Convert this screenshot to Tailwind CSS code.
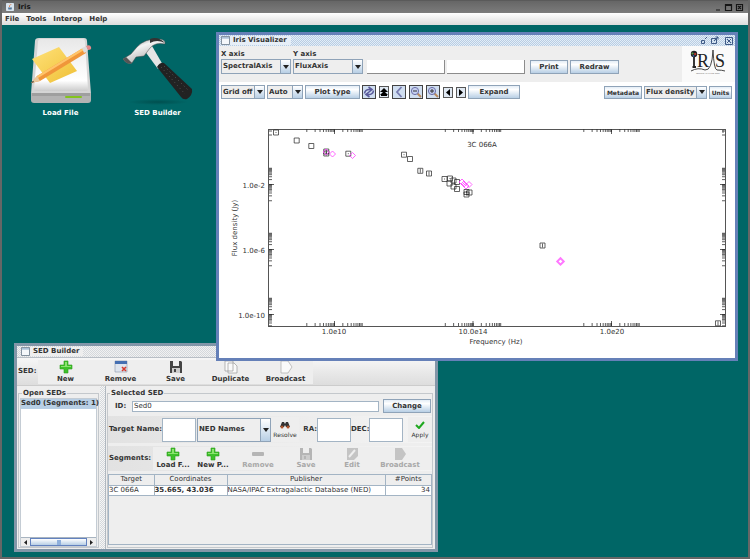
<!DOCTYPE html>
<html lang="en">
<head>
    <meta charset="UTF-8">
    <meta name="viewport" content="width=device-width, initial-scale=1.0">
    <title>Iris</title>
    <script src="https://cdn.jsdelivr.net/npm/@tailwindcss/browser@4"></script>
</head>
<body class="h-screen overflow-hidden flex flex-col bg-[#006666] border-x-2 border-b-2 border-[#666666] font-['DejaVu_Sans',sans-serif] text-[7px] leading-[9px] font-bold text-[#333333]">

    <!-- shared icons -->
    <svg class="hidden">
        <symbol id="arrow" viewBox="0 0 6 4"><path d="M0 0h6L3 4z" fill="#222"/></symbol>
        <symbol id="plus" viewBox="0 0 14 14"><path d="M5 1h4v4h4v4H9v4H5V9H1V5h4z" fill="#3fc12c" stroke="#2b9a1c" stroke-width=".6"/><path d="M6 2h2v4h4v1H2V6h4z" fill="#8be36f"/></symbol>
        <symbol id="minus" viewBox="0 0 14 14"><rect x="1" y="5" width="12" height="4" rx="1" fill="#b5b5b5"/></symbol>
        <symbol id="disk" viewBox="0 0 14 14"><path d="M1 1h11l1 1v11H1z" fill="currentColor"/><path d="M4 1h6v5H4z" fill="#eee"/><path d="M3 8h8v5H3z" fill="#ccc"/><path d="M5 9h2v3H5z" fill="currentColor"/></symbol>
        <symbol id="tag" viewBox="0 0 14 14"><path d="M2 1h7l4 6-4 6H2z" fill="currentColor"/></symbol>
        <symbol id="frame" viewBox="0 0 10 10"><path d="M.5.5h9v9h-9z" fill="#f4f7fa" stroke="#6f7f8f"/><path d="M1 1h8v2H1z" fill="#a9bfd6"/></symbol>
        <symbol id="lens" viewBox="0 0 12 12"><path d="M7 7l4 4" stroke="#b98a5c" stroke-width="2"/><circle cx="5" cy="5" r="3.6" fill="#c5cff0" stroke="#6c6fa8"/></symbol>
    </svg>

    <header class="h-[13px] shrink-0 flex items-center gap-1 px-1 border-t border-[#5a5a5a] bg-linear-to-b from-[#666666] to-[#7c7c7c] text-[#161616]">
        <svg class="size-2" viewBox="0 0 10 10"><rect width="10" height="10" rx="1" fill="#d8e4ee"/><path d="M5 1q2 1 0 2t0 2" fill="none" stroke="#e06a2c"/><path d="M2.500 5.500h5L7 8H3z" fill="#56789c"/></svg>
        <h1 class="grow">Iris</h1>
        <svg class="w-[30px] h-[9px]" viewBox="0 0 30 9" fill="none" stroke="#161616" stroke-width="1.200"><path d="M2 7h4M11.500 1.500h6v6h-6zM11.500 2.500h6M22.500 1.500h6v6h-6zM24 3l3 3M27 3l-3 3"/></svg>
    </header>

    <nav class="h-3 shrink-0 flex items-center gap-[7px] px-[3px] bg-linear-to-b from-white to-[#dcdcdc]">
        <a href="#">File</a>
        <a href="#">Tools</a>
        <a href="#">Interop</a>
        <a href="#">Help</a>
    </nav>

    <main class="relative grow">
        <div class="flex gap-4 pl-[18px] pt-[10px] text-white">
            <a href="#" class="w-[81px] flex flex-col items-center gap-1">
                <svg class="w-[64px] h-[70px]" viewBox="0 0 64 70">
                    <defs>
                        <linearGradient id="body" x2="0" y2="1"><stop stop-color="#e8e8e8"/><stop offset=".8" stop-color="#fff"/><stop offset="1" stop-color="#ccc"/></linearGradient>
                        <linearGradient id="note" x2="1" y2="1"><stop stop-color="#ffe27a"/><stop offset="1" stop-color="#efbf35"/></linearGradient>
                    </defs>
                    <path d="M6 6q0-3 4-3h45q3 0 3 3l4 53q0 3-3 3H5q-3 0-3-3z" fill="#d5d5d5"/>
                    <path d="M9 7q0-3 3-3h41q3 0 3 3l3 47q0 2-2 2H7q-2 0-2-2z" fill="url(#body)"/>
                    <path d="M2 58h60v7q0 3-3 3H5q-3 0-3-3z" fill="#b3b3b3"/>
                    <path d="M3 58h58v3H3z" fill="#8c8c8c" opacity=".5"/>
                    <rect x="36" y="61" width="17" height="2" rx="1" fill="#83c41d"/>
                    <path d="M3 24l27-12 18 24-27 12z" fill="url(#note)"/>
                    <path d="M2 48l6-7 46-28 3 5L11 46z" fill="#f0963a"/>
                    <path d="M8 41l46-28 1 2L9 43z" fill="#ffc469"/>
                    <path d="M2 48l6-7 3 5z" fill="#e9c9a0"/><path d="M2 48l2-2 1 1z" fill="#222"/>
                    <path d="M53 13l4-2 2 4-4 3z" fill="#ddd"/><path d="M57 11q4-2 5 1t-3 3z" fill="#e58a8a"/>
                </svg>
                <span>Load File</span>
            </a>
            <a href="#" class="w-[81px] flex flex-col items-center gap-1">
                <svg class="w-[72px] h-[70px]" viewBox="0 0 72 70">
                    <defs>
                        <linearGradient id="steel" x2=".6" y2="1"><stop stop-color="#555"/><stop offset=".4" stop-color="#f4f4f4"/><stop offset="1" stop-color="#a8a8a8"/></linearGradient>
                        <radialGradient id="shade"><stop stop-color="#004f4f"/><stop offset="1" stop-color="#006666"/></radialGradient>
                    </defs>
                    <ellipse cx="36" cy="67" rx="30" ry="3" fill="url(#shade)"/>
                    <path d="M22 15l8-4 11 19-5 4z" fill="#e5e5e5"/>
                    <path d="M1 24l8-5 6-7q8-9 23-8 6 1 5 5-10-2-15 4l-6 8-8 1-4 6q-5 2-9-4z" fill="url(#steel)" stroke="#444" stroke-width=".5"/>
                    <path d="M28 4q8-3 15 4-8-4-15 0z" fill="#333"/>
                    <path d="M1 24l3-2 6 6q-5 2-9-4z" fill="#555"/>
                    <path d="M35 32q3-5 7-4l28 26q1 6-5 10-4 1-6-2z" fill="#222"/>
                    <path d="M39 32l24 27M42 31l24 24" stroke="#555" stroke-dasharray="1 3" fill="none"/>
                </svg>
                <span>SED Builder</span>
            </a>
        </div>

        <!-- SED Builder window -->
        <section class="absolute left-[12px] top-[318px] w-[424px] h-[209px] flex flex-col border-3 border-[#8296a8] bg-[#eeeeee]">
            <div class="h-3 shrink-0 flex items-center gap-1 px-1 border-b border-[#b8bec5] bg-[repeating-conic-gradient(#d4d8dc_0%_25%,#f1f1f1_0%_50%)] bg-size-[2px_2px]">
                <div class="flex items-center gap-[3px] pr-1 bg-[#eeeeee]">
                    <svg class="size-[9px]"><use href="#frame"/></svg>
                    <h2>SED Builder</h2>
                </div>
            </div>
            <div class="h-7 shrink-0 flex items-center border-b border-[#cccccc] bg-linear-to-b from-[#f6f6f6] to-[#dddddd]">
                <span class="w-[21px] pl-px">SED:</span>
                <div class="flex bg-[#eeeeee]">
                    <button class="w-[55px] flex flex-col items-center gap-px"><svg class="size-[14px]"><use href="#plus"/></svg>New</button>
                    <button class="w-[55px] flex flex-col items-center gap-px"><svg class="size-[14px]" viewBox="0 0 14 14"><path d="M1 1h12v11H1z" fill="#dfe5ee" stroke="#8b96a8" stroke-width=".6"/><path d="M1 1h12v3H1z" fill="#456fb2"/><path d="M8 7l4 4M12 7l-4 4" stroke="#d63a2d" stroke-width="1.600"/></svg>Remove</button>
                    <button class="w-[55px] flex flex-col items-center gap-px"><svg class="size-[14px] text-[#444444]"><use href="#disk"/></svg>Save</button>
                    <button class="w-[55px] flex flex-col items-center gap-px"><svg class="size-[14px]" viewBox="0 0 14 14"><path d="M1 1h8v10H1zM4 3h6l3 3v7H4z" fill="#fafafa" stroke="#999" stroke-width=".7"/></svg>Duplicate</button>
                    <button class="w-[55px] flex flex-col items-center gap-px"><svg class="size-[14px]" viewBox="0 0 14 14"><path d="M2 1h7l4 6-4 6H2z" fill="#fafafa" stroke="#aaa" stroke-width=".7"/></svg>Broadcast</button>
                </div>
            </div>

            <div class="grow flex min-h-0">
                <fieldset class="w-[81px] shrink-0 m-px mt-[3px] px-px pb-px border border-[#c4c8cc] min-w-0">
                    <legend class="ml-[2px] px-px">Open SEDs</legend>
                    <div class="h-[149px] flex flex-col border border-[#c4ccd4] bg-white">
                        <ul class="grow"><li class="h-[10px] bg-[#b8cfe5] whitespace-nowrap">Sed0 (Segments: 1)</li></ul>
                        <div class="h-[9px] flex border-t border-[#a8b4c0] bg-[#eeeeee]">
                            <button class="w-[9px] flex items-center justify-center" aria-label="Scroll left"><svg class="w-[3px] h-[5px]" viewBox="0 0 3 5"><path d="M3 0v5L0 2.500z" fill="#222"/></svg></button>
                            <div class="grow flex items-center justify-center border border-[#6382bf] bg-linear-to-b from-white to-[#b8cfe5]"><div class="w-1 h-[5px] bg-[#8fb0dc]"></div></div>
                            <button class="w-[9px] flex items-center justify-center" aria-label="Scroll right"><svg class="w-[3px] h-[5px]" viewBox="0 0 3 5"><path d="M0 0v5l3-2.500z" fill="#222"/></svg></button>
                        </div>
                    </div>
                </fieldset>
                <div class="w-[6px] shrink-0 border-r border-[#b0b8c0] bg-[repeating-conic-gradient(#d4d8dc_0%_25%,#f6f6f6_0%_50%)] bg-size-[2px_2px]"></div>
                <fieldset class="flex-1 min-w-0 m-px mt-[3px] mr-[2px] border border-[#c4c8cc]">
                    <legend class="ml-[2px] px-px">Selected SED</legend>
                    <div class="h-4 flex items-center px-px">
                        <label for="sedId" class="w-[23px] pl-[6px]">ID:</label>
                        <input id="sedId" type="text" value="Sed0" class="grow min-w-0 h-[11px] px-px mr-1 border border-[#a3b4c4] bg-white font-normal">
                        <button class="w-12 h-[14px] border border-[#8fa3b8] bg-linear-to-b from-[#e4edf6] via-white via-30% to-[#b8cfe5]">Change</button>
                    </div>
                    <div class="h-[27px] mt-[2px] flex items-center bg-linear-to-r from-[#e2e2e2] to-[#f4f4f4]">
                        <label for="target" class="w-[54px] pl-px whitespace-nowrap">Target Name:</label>
                        <input id="target" type="text" class="w-[34px] h-6 border border-[#a3b4c4] bg-white">
                        <div class="w-[74px] h-6 ml-px flex border border-[#8fa3b8]">
                            <select aria-label="Name service" class="grow min-w-0 appearance-none pl-px bg-[#eeeeee]"><option>NED Names</option></select>
                            <div class="w-[10px] flex items-center justify-center border-l border-[#8fa3b8] bg-linear-to-b from-white to-[#b8cfe5]"><svg class="w-[6px] h-1"><use href="#arrow"/></svg></div>
                        </div>
                        <button class="w-7 h-[25px] flex flex-col items-center justify-center gap-px bg-[#eeeeee] text-[6px] font-normal"><svg class="w-[10px] h-2" viewBox="0 0 10 8"><path d="M2 1h2l1 2 1-2h2l2 5H6L5 4 4 6H0z" fill="#333"/><circle cx="2" cy="6" r="1.500" fill="#b0532a"/><circle cx="8" cy="6" r="1.500" fill="#b0532a"/></svg>Resolve</button>
                        <label for="ra" class="w-[18px] text-right">RA:</label>
                        <input id="ra" type="text" class="w-[34px] h-6 border border-[#a3b4c4] bg-white">
                        <label for="dec" class="w-[18px] text-right">DEC:</label>
                        <input id="dec" type="text" class="w-[34px] h-6 border border-[#a3b4c4] bg-white">
                        <button class="w-6 h-[25px] ml-[5px] flex flex-col items-center justify-center gap-px bg-[#eeeeee] text-[6px] font-normal"><svg class="w-[10px] h-2" viewBox="0 0 10 8"><path d="M1 4l3 3 5-6" fill="none" stroke="#1fa81f" stroke-width="2"/></svg>Apply</button>
                    </div>
                    <div class="h-[25px] mt-[3px] flex items-center bg-linear-to-r from-[#e2e2e2] to-[#f4f4f4]">
                        <span class="w-[45px] pl-px">Segments:</span>
                        <div class="grow flex bg-[#eeeeee] text-[#a8a8a8]">
                            <button class="w-10 flex flex-col items-center text-[#333333]"><svg class="size-[14px]"><use href="#plus"/></svg>Load F...</button>
                            <button class="w-10 flex flex-col items-center text-[#333333]"><svg class="size-[14px]"><use href="#plus"/></svg>New P...</button>
                            <button class="w-[50px] flex flex-col items-center" disabled><svg class="size-[14px]"><use href="#minus"/></svg>Remove</button>
                            <button class="w-[46px] flex flex-col items-center" disabled><svg class="size-[14px] text-[#b5b5b5]"><use href="#disk"/></svg>Save</button>
                            <button class="w-[46px] flex flex-col items-center" disabled><svg class="size-[14px]" viewBox="0 0 14 14"><path d="M2 1h11v8l-4 4H2z" fill="#c4c4c4"/><path d="M4 10l6-7" stroke="#eee" stroke-width="2"/></svg>Edit</button>
                            <button class="w-[50px] flex flex-col items-center" disabled><svg class="size-[14px] text-[#c4c4c4]"><use href="#tag"/></svg>Broadcast</button>
                        </div>
                    </div>
                    <div class="h-[71px] mt-[3px] border border-[#a3b4c4]">
                        <table class="w-full table-fixed border-collapse font-normal text-left">
                            <thead>
                                <tr class="h-[10px] text-center">
                                    <th class="w-[45px] font-normal border-r border-b border-[#a3b4c4]">Target</th>
                                    <th class="w-[73px] font-normal border-r border-b border-[#a3b4c4]">Coordinates</th>
                                    <th class="font-normal border-r border-b border-[#a3b4c4]">Publisher</th>
                                    <th class="w-[46px] font-normal border-b border-[#a3b4c4]">#Points</th>
                                </tr>
                            </thead>
                            <tbody>
                                <tr class="h-[9px] bg-white whitespace-nowrap">
                                    <td class="border-r border-b border-[#a3b4c4]">3C 066A</td>
                                    <td class="font-bold border-r border-b border-[#a3b4c4]">35.665, 43.036</td>
                                    <td class="border-r border-b border-[#a3b4c4]">NASA/IPAC Extragalactic Database (NED)</td>
                                    <td class="pr-px text-right border-b border-[#a3b4c4]">34</td>
                                </tr>
                            </tbody>
                        </table>
                    </div>
                </fieldset>
            </div>
        </section>

        <!-- Visualizer window -->
        <section class="absolute left-[214px] top-[7px] w-[522px] h-[329px] flex flex-col border-3 border-[#6580b8] bg-white">
            <div class="h-[11px] shrink-0 flex items-center justify-between px-[2px] bg-[repeating-conic-gradient(#b8cde3_0%_25%,#e3edf7_0%_50%)] bg-size-[2px_2px]">
                <div class="flex items-center gap-[3px] pr-1 bg-[#e6eef7]">
                    <svg class="size-[9px]"><use href="#frame"/></svg>
                    <h2>Iris Visualizer</h2>
                </div>
                <svg class="w-[34px] h-[9px]" viewBox="0 0 34 9" fill="none" stroke="#3f5a86"><path d="M2.500 4.500h3v3h-3zM8 1L6 3M12.500 2.500h5v5h-5zM15 5l4-4M16.500 1H19v2.500M26.500 1.500h7v7h-7zM28 3l4 4M32 3l-4 4"/></svg>
            </div>
            <div class="h-9 shrink-0 flex bg-[#eeeeee]">
                <div class="grow flex items-end gap-[2px] pl-[2px] pb-2">
                    <div class="w-[70px]">
                        <label for="xAxis" class="block">X axis</label>
                        <div class="h-[15px] flex border border-[#8fa3b8]">
                            <select id="xAxis" class="grow min-w-0 appearance-none pl-px bg-[#eeeeee]"><option>SpectralAxis</option></select>
                            <div class="w-[10px] flex items-center justify-center border-l border-[#8fa3b8] bg-linear-to-b from-white to-[#b8cfe5]"><svg class="w-[6px] h-1"><use href="#arrow"/></svg></div>
                        </div>
                    </div>
                    <div class="w-[70px]">
                        <label for="yAxis" class="block">Y axis</label>
                        <div class="h-[15px] flex border border-[#8fa3b8]">
                            <select id="yAxis" class="grow min-w-0 appearance-none pl-px bg-[#eeeeee]"><option>FluxAxis</option></select>
                            <div class="w-[10px] flex items-center justify-center border-l border-[#8fa3b8] bg-linear-to-b from-white to-[#b8cfe5]"><svg class="w-[6px] h-1"><use href="#arrow"/></svg></div>
                        </div>
                    </div>
                    <input type="text" aria-label="Minimum" class="w-[78px] h-[14px] ml-[2px] border-r border-b border-[#8c8c8c] bg-white">
                    <input type="text" aria-label="Maximum" class="w-[78px] h-[14px] border-r border-b border-[#8c8c8c] bg-white">
                    <button class="w-[38px] h-[14px] ml-[3px] border border-[#8fa3b8] bg-linear-to-b from-[#e4edf6] via-white via-30% to-[#b8cfe5]">Print</button>
                    <button class="w-[49px] h-[14px] border border-[#8fa3b8] bg-linear-to-b from-[#e4edf6] via-white via-30% to-[#b8cfe5]">Redraw</button>
                </div>
                <svg class="w-[53px] h-9 bg-[#fafafa]" viewBox="0 0 53 36">
                    <g font-family="Liberation Serif, serif" font-weight="normal" fill="#222">
                        <text x="15" y="21" font-size="18">R</text>
                        <text x="33" y="21" font-size="18">S</text>
                        <text x="26" y="28" font-size="2" text-anchor="middle">IRIS SED ANALYSIS TOOL</text>
                    </g>
                    <path d="M12 9v12M10.500 21h3.500" stroke="#222" stroke-width="1.800"/>
                    <circle cx="12" cy="8" r="3.200" fill="#222"/><circle cx="10.500" cy="7.500" r="1.100" fill="#5a9e4a"/><circle cx="13.200" cy="8" r="1.100" fill="#cf3b2f"/><circle cx="11.500" cy="9.800" r=".9" fill="#3a66b8"/>
                    <path d="M9 25q7-4 14-1 7 1 8-20 1 20 4 20 5 0 8 1" fill="none" stroke="#333" stroke-width=".9"/>
                </svg>
            </div>
            <div class="h-[20px] shrink-0 flex items-center pl-[2px] pr-[3px] gap-[2px]">
                <div class="w-[44px] h-[14px] flex border border-[#8fa3b8]">
                    <select aria-label="Grid" class="grow min-w-0 appearance-none pl-px bg-[#eeeeee]"><option>Grid off</option></select>
                    <div class="w-[10px] flex items-center justify-center border-l border-[#8fa3b8] bg-linear-to-b from-white to-[#b8cfe5]"><svg class="w-[6px] h-1"><use href="#arrow"/></svg></div>
                </div>
                <div class="w-[36px] h-[14px] flex border border-[#8fa3b8]">
                    <select aria-label="Scale" class="grow min-w-0 appearance-none pl-px bg-[#eeeeee]"><option>Auto</option></select>
                    <div class="w-[10px] flex items-center justify-center border-l border-[#8fa3b8] bg-linear-to-b from-white to-[#b8cfe5]"><svg class="w-[6px] h-1"><use href="#arrow"/></svg></div>
                </div>
                <button class="w-[55px] h-[14px] border border-[#8fa3b8] bg-linear-to-b from-[#e4edf6] via-white via-30% to-[#b8cfe5]">Plot type</button>
                <div class="flex items-center gap-[3px]">
                    <button aria-label="Reset" class="size-[14px] flex items-center justify-center border border-[#444444] bg-[#d0def0]"><svg class="size-3" viewBox="0 0 12 12" fill="none" stroke="#5c5c9c" stroke-width="1.600"><path d="M1.500 7.500Q2 3 7.500 3.500M5.500 1l3.500 2.500L6 6M10.500 4.500Q10 9 4.500 8.500M6.500 11L3 8.500 6 6"/></svg></button>
                    <button aria-label="Up" class="w-[10px] h-3 flex items-center justify-center border border-[#555555] bg-[#dfe8f2]"><svg class="size-2" viewBox="0 0 8 8"><path d="M4 0l4 4H0zM4 3l4 4H0zM1 7h6v1H1z" fill="#000"/></svg></button>
                    <button aria-label="Back" class="size-[14px] flex items-center justify-center border border-[#444444] bg-[#d0def0]"><svg class="size-3" viewBox="0 0 12 12"><path d="M8.500 1L4 6l4.500 5" fill="none" stroke="#777cb0" stroke-width="1.800"/></svg></button>
                    <button aria-label="Zoom out" class="size-[14px] flex items-center justify-center border border-[#444444] bg-[#d0def0]"><svg class="size-3" viewBox="0 0 12 12"><use href="#lens"/><path d="M3 5h4" stroke="#333"/></svg></button>
                    <button aria-label="Zoom in" class="size-[14px] flex items-center justify-center border border-[#444444] bg-[#d0def0]"><svg class="size-3" viewBox="0 0 12 12"><use href="#lens"/><path d="M3 5h4M5 3v4" stroke="#333"/></svg></button>
                    <button aria-label="Left" class="w-[10px] h-[11px] flex items-center justify-center border border-[#555555] bg-[#dfe8f2]"><svg class="w-1 h-[7px]" viewBox="0 0 4 7"><path d="M4 0v7L0 3.500z" fill="#000"/></svg></button>
                    <button aria-label="Right" class="w-[10px] h-[11px] flex items-center justify-center border border-[#555555] bg-[#dfe8f2]"><svg class="w-1 h-[7px]" viewBox="0 0 4 7"><path d="M0 0v7l4-3.500z" fill="#000"/></svg></button>
                </div>
                <button class="w-[52px] h-[14px] border border-[#8fa3b8] bg-linear-to-b from-[#e4edf6] via-white via-30% to-[#b8cfe5]">Expand</button>
                <div class="grow flex justify-end gap-[2px]">
                    <button class="w-[38px] h-[13px] border border-[#8fa3b8] bg-linear-to-b from-[#e4edf6] via-white via-30% to-[#b8cfe5] text-[6px]">Metadata</button>
                    <div class="w-[63px] h-[13px] flex border border-[#8fa3b8]">
                        <select aria-label="Quantity" class="grow min-w-0 appearance-none pl-px bg-[#eeeeee]"><option>Flux density</option></select>
                        <div class="w-[10px] flex items-center justify-center border-l border-[#8fa3b8] bg-linear-to-b from-white to-[#b8cfe5]"><svg class="w-[6px] h-1"><use href="#arrow"/></svg></div>
                    </div>
                    <button class="w-[23px] h-[13px] border border-[#8fa3b8] bg-linear-to-b from-[#e4edf6] via-white via-30% to-[#b8cfe5] text-[6px]">Units</button>
                </div>
            </div>
            <svg class="grow w-full min-h-0 font-normal" viewBox="219 102 516 256" fill="none">
                <rect x="268.500" y="129.500" width="457" height="197" stroke="#555"/>
                <path id="ticks" stroke="#333" stroke-width=".8"/>
                <path id="squares" stroke="#222" stroke-width=".7"/>
                <path id="diamonds" stroke="#ff40ff" stroke-width=".8"/>
                <path d="M560.500 258.200l3.200 3.200-3.200 3.200-3.200-3.200z" stroke="#ff78ff" stroke-width="2"/>
                <g fill="#333" font-size="7">
                    <text x="482" y="147" text-anchor="middle">3C 066A</text>
                    <text x="265" y="188" text-anchor="end">1.0e-2</text>
                    <text x="265" y="253" text-anchor="end">1.0e-6</text>
                    <text x="265" y="318" text-anchor="end">1.0e-10</text>
                    <text x="334" y="334" text-anchor="middle">1.0e10</text>
                    <text x="473" y="334" text-anchor="middle">10.0e14</text>
                    <text x="612" y="334" text-anchor="middle">1.0e20</text>
                    <text x="496" y="344" text-anchor="middle">Frequency (Hz)</text>
                    <text transform="translate(237 228) rotate(-90)" text-anchor="middle">Flux density (Jy)</text>
                </g>
            </svg>
        </section>
    </main>

    <script>
        // x, y, half height of the error bar
        const squares = [
            [276, 132.5, .5], [296.7, 140.5, 0], [311.3, 146, 0], [326.3, 151.5, 2], [326.3, 153.5, 2], [348.3, 153.7, .5],
            [404, 154.7, .5], [410, 159, 0], [420.3, 170.8, 2], [429, 173.5, 2], [444.5, 179, .5], [450, 178.5, .5],
            [449.5, 183.5, 0], [453.5, 180.5, 0], [453.5, 186.5, 0], [457, 182, 0], [457, 189, 0], [466.5, 192, 1],
            [466.5, 194.5, 1], [469.5, 192.5, 0], [542.5, 245.5, 2], [718, 323.3, 2]
        ];
        const diamonds = [[326, 152], [332.5, 154], [352.5, 155.5], [462, 182], [464, 184], [466, 186], [469, 184.5]];

        // log ticks: one decade on each side of every labelled value
        let ticks = 'M269 131h3M269 135h3M725 131h-3M725 135h-3M723 130v3';
        [334.5, 473, 611.5].forEach(major => {
            ticks += `M${major} 129v5M${major} 326v-5`;
            for (let decade = -1; decade < 1; decade++) {
                for (let k = 1; k <= 10; k++) {
                    const x = major + 27.7 * (decade + Math.log10(k));
                    ticks += `M${x} 129v3M${x} 326v-3`;
                }
            }
        });
        [184.5, 249.5, 314.5].forEach(major => {
            ticks += `M269 ${major}h5M725 ${major}h-5`;
            for (let decade = -1; decade < 1; decade++) {
                for (let k = 1; k <= 10; k++) {
                    const y = major - 16.25 * (decade + Math.log10(k));
                    if (y < 326) ticks += `M269 ${y}h3M725 ${y}h-3`;
                }
            }
        });
        document.getElementById('ticks').setAttribute('d', ticks);
        document.getElementById('squares').setAttribute('d', squares.map(([x, y, bar]) =>
            `M${x - 2.5} ${y - 2.5}h5v5h-5zM${x} ${y - bar}v${2 * bar}`).join(''));
        document.getElementById('diamonds').setAttribute('d', diamonds.map(([x, y]) =>
            `M${x} ${y - 3}l3 3-3 3-3-3z`).join(''));
    </script>
</body>
</html>
